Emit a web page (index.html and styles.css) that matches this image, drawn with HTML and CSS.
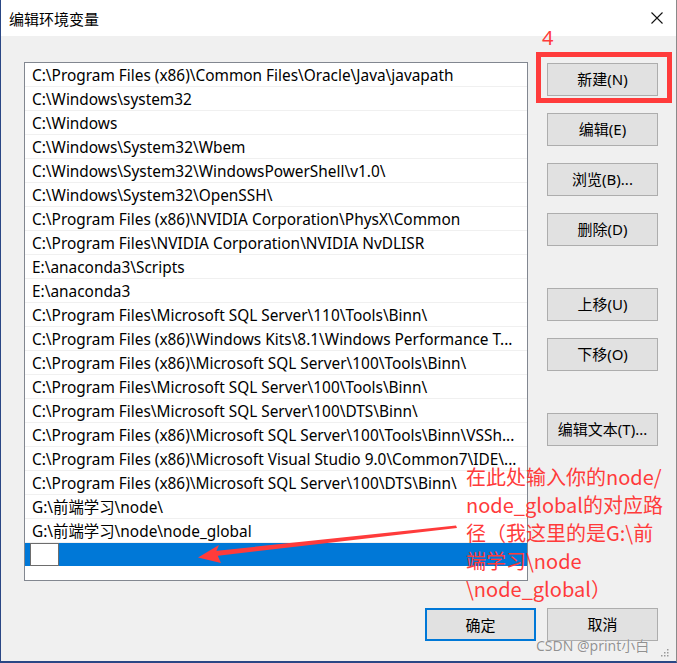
FILE: index.html
```html
<!DOCTYPE html>
<html lang="zh-CN">
<head>
<meta charset="utf-8">
<title>编辑环境变量</title>
<link rel="stylesheet" href="styles.css">
</head>
<body>
<div class="window">
  <div class="titlebar">
    <span class="title">编辑环境变量</span>
    <svg class="close" width="12" height="12" viewBox="0 0 12 12"><path d="M0.5 0.5 L11.5 11.5 M11.5 0.5 L0.5 11.5" stroke="#111" stroke-width="1.1" fill="none"/></svg>
  </div>
  <div class="content">
    <div class="main">
      <div class="listbox">
        <div class="row">C:\Program Files (x86)\Common Files\Oracle\Java\javapath</div>
        <div class="row">C:\Windows\system32</div>
        <div class="row">C:\Windows</div>
        <div class="row">C:\Windows\System32\Wbem</div>
        <div class="row">C:\Windows\System32\WindowsPowerShell\v1.0\</div>
        <div class="row">C:\Windows\System32\OpenSSH\</div>
        <div class="row">C:\Program Files (x86)\NVIDIA Corporation\PhysX\Common</div>
        <div class="row">C:\Program Files\NVIDIA Corporation\NVIDIA NvDLISR</div>
        <div class="row">E:\anaconda3\Scripts</div>
        <div class="row">E:\anaconda3</div>
        <div class="row">C:\Program Files\Microsoft SQL Server\110\Tools\Binn\</div>
        <div class="row">C:\Program Files (x86)\Windows Kits\8.1\Windows Performance T...</div>
        <div class="row">C:\Program Files (x86)\Microsoft SQL Server\100\Tools\Binn\</div>
        <div class="row">C:\Program Files\Microsoft SQL Server\100\Tools\Binn\</div>
        <div class="row">C:\Program Files\Microsoft SQL Server\100\DTS\Binn\</div>
        <div class="row">C:\Program Files (x86)\Microsoft SQL Server\100\Tools\Binn\VSSh...</div>
        <div class="row">C:\Program Files (x86)\Microsoft Visual Studio 9.0\Common7\IDE\...</div>
        <div class="row">C:\Program Files (x86)\Microsoft SQL Server\100\DTS\Binn\</div>
        <div class="row">G:\前端学习\node\</div>
        <div class="row">G:\前端学习\node\node_global</div>
        <div class="row selected"><span class="editbox"></span></div>
      </div>
      <div class="buttons">
        <button class="btn">新建(N)</button>
        <button class="btn">编辑(E)</button>
        <button class="btn">浏览(B)...</button>
        <button class="btn">删除(D)</button>
        <button class="btn group">上移(U)</button>
        <button class="btn">下移(O)</button>
        <button class="btn group">编辑文本(T)...</button>
      </div>
    </div>
    <div class="footer">
      <button class="btn default">确定</button>
      <button class="btn">取消</button>
    </div>
  </div>

  <div class="redbox"></div>
  <div class="step">4</div>
  <div class="note">在此处输入你的node/<br>node_global的对应路<br>径（我这里的是G:\前<br>端学习\node<br>\node_global）</div>
  <svg class="arrow" width="677" height="663" viewBox="0 0 677 663">
    <polygon points="456,525.5 457,528 216,556 215,551" fill="#ff3b3b"/>
    <polygon points="198,557.5 219,545 216,552 221,563" fill="#ff3b3b"/>
  </svg>
  <div class="watermark">CSDN @print小白</div>
  <svg class="grip" width="8" height="8" viewBox="0 0 8 8">
    <rect x="6" y="0" width="1.5" height="1.5" fill="#999"/>
    <rect x="3" y="3" width="1.5" height="1.5" fill="#999"/>
    <rect x="6" y="3" width="1.5" height="1.5" fill="#999"/>
    <rect x="0" y="6" width="1.5" height="1.5" fill="#999"/>
    <rect x="3" y="6" width="1.5" height="1.5" fill="#999"/>
    <rect x="6" y="6" width="1.5" height="1.5" fill="#999"/>
  </svg>
</div>
</body>
</html>
```
FILE: styles.css
```css
* { box-sizing: border-box; }
html, body { margin: 0; padding: 0; background: #ffffff; }
body {
  font-family: "Segoe UI", "Noto Sans", "Noto Sans CJK SC", sans-serif;
}
.window {
  position: relative;
  width: 677px;
  height: 663px;
  background: #f0f0f0;
  border-left: 1px solid #2a4785;
  border-bottom: 2px solid #2a4785;
  border-right: 1px solid #8a8a8a;
  overflow: hidden;
}
.titlebar {
  height: 36px;
  background: #ffffff;
  display: flex;
  align-items: center;
  justify-content: space-between;
  padding: 0 13px 0 8px;
}
.title {
  font-family: "Noto Sans CJK SC", sans-serif;
  font-size: 15px;
  color: #000;
}
.close { display: block; margin-top: -1px; }
.content {
  padding: 26px 18px 0 23px;
}
.main {
  display: flex;
  align-items: flex-start;
}
.listbox {
  width: 504px;
  height: 519px;
  background: #ffffff;
  border: 1px solid #828790;
  overflow: hidden;
}
.row {
  height: 24px;
  border-bottom: 1px solid #f0f0f0;
  padding-left: 7px;
  padding-top: 3px;
  font-family: "Noto Sans", "Noto Sans CJK SC", sans-serif;
  font-size: 15.4px;
  line-height: 20px;
  color: #000;
  white-space: nowrap;
  overflow: hidden;
}
.row.selected {
  background: #0078d7;
  border-bottom: 1px solid #ffffff;
  padding: 0 0 0 5px;
  display: flex;
  align-items: stretch;
}
.editbox {
  display: block;
  width: 29px;
  height: 23px;
  background: #fff;
  border: 1px solid #6d6d6d;
}
.buttons {
  display: flex;
  flex-direction: column;
  gap: 17px;
  margin-left: 19px;
  margin-top: 1px;
}
.btn {
  width: 111px;
  height: 33px;
  background: #e1e1e1;
  border: 1px solid #adadad;
  font-family: "Noto Sans", "Noto Sans CJK SC", sans-serif;
  font-size: 15px;
  color: #000;
  padding: 0;
  line-height: 31px;
}
.btn.group { margin-top: 25px; }
.btn.default { border: 2px solid #0078d7; }
.footer {
  display: flex;
  justify-content: flex-end;
  gap: 11px;
  margin-top: 27px;
}
.redbox {
  position: absolute;
  left: 535px;
  top: 52px;
  width: 136px;
  height: 51px;
  border: 5px solid #ff3b3b;
}
.step {
  position: absolute;
  left: 541px;
  top: 24px;
  font-family: "Noto Sans", sans-serif;
  font-size: 20px;
  color: #ff3b3b;
}
.note {
  position: absolute;
  left: 465px;
  top: 463px;
  font-family: "Noto Sans CJK SC", sans-serif;
  font-size: 20px;
  line-height: 28px;
  color: #ff3b3b;
  white-space: nowrap;
}
.arrow {
  position: absolute;
  left: -1px;
  top: 0;
  pointer-events: none;
}
.watermark {
  position: absolute;
  left: 535px;
  top: 635px;
  font-family: "Noto Sans", "Noto Sans CJK SC", sans-serif;
  font-size: 14px;
  color: rgba(110, 110, 110, 0.75);
  text-shadow: 0 0 1px #ffffff;
  white-space: nowrap;
}
.grip {
  position: absolute;
  right: 7px;
  bottom: 4px;
}
```
